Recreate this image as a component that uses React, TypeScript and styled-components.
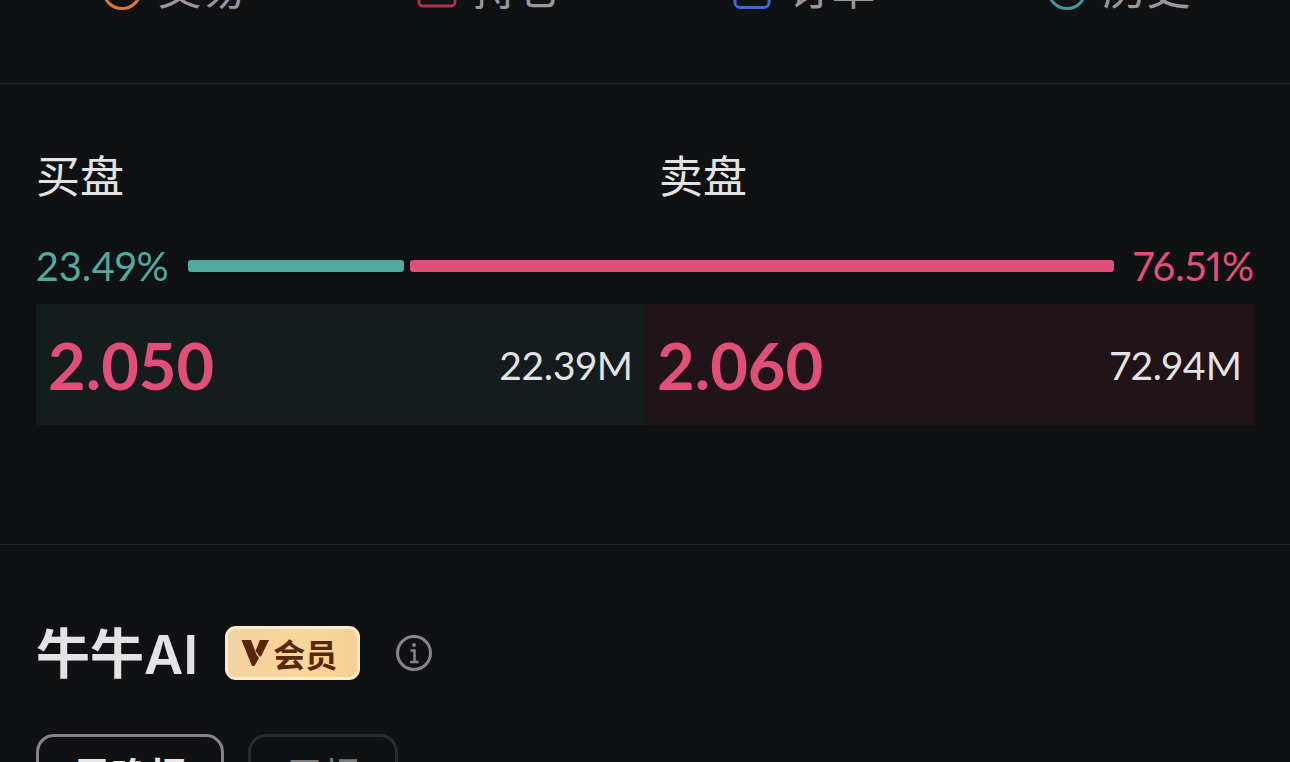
import React from "react";
import styled, { createGlobalStyle } from "styled-components";

const GlobalStyle = createGlobalStyle`
  * { box-sizing: border-box; }
  body {
    margin: 0;
    background: #101113;
    color: #e3e3e5;
    font-family: Lato, "Noto Sans CJK SC", sans-serif;
  }
`;

const GREEN = "#52aa9e";
const PINK = "#e04f78";

const Screen = styled.main`
  height: 100vh;
  overflow: hidden;
`;

const Nav = styled.nav`
  display: grid;
  grid-template-columns: repeat(4, 1fr);
  margin-top: -35px;
  padding: 0 14px 72px 16px;
  border-bottom: 1px solid #26272a;
`;

const NavLink = styled.a`
  display: flex;
  justify-content: center;
  align-items: center;
  gap: 16px;
  color: #98989b;
  font-size: 44px;
  line-height: 46px;
  text-decoration: none;
`;

const Depth = styled.section`
  padding: 70px 36px 119px;
  border-bottom: 1px solid #222326;
`;

const Sides = styled.div`
  display: grid;
  grid-template-columns: 1fr 1fr;
  column-gap: 28px;
`;

const SideTitle = styled.h2`
  margin: 0;
  font-size: 44px;
  font-weight: 400;
  line-height: 44px;
`;

const Ratio = styled.div`
  display: flex;
  align-items: center;
  gap: 19px;
  margin-top: 44px;
  height: 48px;
`;

const Percent = styled.span<{ $color: string }>`
  color: ${(p) => p.$color};
  font-size: 40px;
  line-height: 48px;
  font-variant-numeric: proportional-nums;
`;

const Track = styled.div`
  display: flex;
  flex: 1;
  gap: 6px;
`;

const Bar = styled.div<{ $color: string }>`
  height: 12px;
  border-radius: 3px;
  background: ${(p) => p.$color};
`;

const Quotes = styled.div`
  display: grid;
  grid-template-columns: 1fr 1fr;
  margin-top: 14px;
`;

const Quote = styled.div<{ $bg: string }>`
  display: flex;
  align-items: center;
  justify-content: space-between;
  height: 121px;
  padding: 0 12px;
  background: ${(p) => p.$bg};
`;

const Price = styled.strong`
  color: ${PINK};
  font-size: 65px;
  font-weight: 700;
  line-height: 76px;
`;

const Volume = styled.span`
  font-size: 39px;
  line-height: 48px;
  font-variant-numeric: proportional-nums;
`;

const Assistant = styled.section`
  padding: 81px 36px 40px;
`;

const Heading = styled.header`
  display: flex;
  align-items: center;
  height: 54px;
`;

const Title = styled.h2`
  margin: 0;
  padding-top: 3px;
  font-family: Inter, "Noto Sans CJK SC", sans-serif;
  font-size: 54px;
  font-weight: 600;
  line-height: 54px;
`;

const Member = styled.button`
  display: flex;
  align-items: center;
  gap: 4px;
  height: 54px;
  margin: 0 36px 0 27px;
  padding: 0 20px 0 13px;
  border: 3px solid #fdebcb;
  border-radius: 11px;
  background: linear-gradient(100deg, #f1d3a2, #fad699 60%, #f5d196);
  color: #582609;
  font-family: "Noto Sans CJK SC", sans-serif;
  font-size: 32px;
  font-weight: 700;
  line-height: 40px;
`;

const InfoButton = styled.button`
  display: flex;
  padding: 0;
  border: 0;
  background: none;
  color: #858587;
`;

const Tabs = styled.div`
  display: flex;
  gap: 24px;
  margin-top: 54px;
`;

const Tab = styled.button<{ $active?: boolean }>`
  padding: 18px 34px;
  border: 3px solid ${(p) => (p.$active ? "#858587" : "#2b2c2f")};
  border-radius: 18px;
  background: none;
  color: ${(p) => (p.$active ? "#e9e9ea" : "#7c7c7f")};
  font-family: "Noto Sans CJK SC", sans-serif;
  font-size: 38px;
  font-weight: ${(p) => (p.$active ? 700 : 400)};
  line-height: 38px;
`;

const Icon = ({ color, children }: { color: string; children: React.ReactNode }) => (
  <svg width="40" height="46" viewBox="0 0 40 46" fill="none" stroke={color} strokeWidth="3" aria-hidden="true">
    {children}
  </svg>
);

const links = [
  { label: "交易", icon: <Icon color="#d97a38"><circle cx="20" cy="25" r="18.5" /><path d="M12 20h16l-5-5M28 28H12l5 5" /></Icon> },
  { label: "持仓", icon: <Icon color="#a93442"><rect x="2" y="8" width="36" height="33" rx="4" /><path d="M10 26h20" /></Icon> },
  { label: "订单", icon: <Icon color="#3d68dc"><rect x="3" y="6" width="34" height="36.5" rx="5" /><path d="M11 17h18M11 26h12" /></Icon> },
  { label: "历史", icon: <Icon color="#4397a3"><circle cx="20" cy="25" r="18.5" /><path d="M20 14v11h9" /></Icon> },
];

export default function App() {
  const buy = 23.49;
  const sell = 76.51;
  return (
    <Screen>
      <GlobalStyle />
      <Nav>
        {links.map((l) => (
          <NavLink href="#" key={l.label}>
            {l.icon}
            <span>{l.label}</span>
          </NavLink>
        ))}
      </Nav>

      <Depth>
        <Sides>
          <SideTitle>买盘</SideTitle>
          <SideTitle>卖盘</SideTitle>
        </Sides>
        <Ratio>
          <Percent $color={GREEN}>{buy}%</Percent>
          <Track>
            <Bar $color={GREEN} style={{ flex: buy }} />
            <Bar $color={PINK} style={{ flex: sell }} />
          </Track>
          <Percent $color={PINK}>{sell}%</Percent>
        </Ratio>
        <Quotes>
          <Quote $bg="#141c1e">
            <Price>2.050</Price>
            <Volume>22.39M</Volume>
          </Quote>
          <Quote $bg="#201418">
            <Price>2.060</Price>
            <Volume>72.94M</Volume>
          </Quote>
        </Quotes>
      </Depth>

      <Assistant>
        <Heading>
          <Title>牛牛AI</Title>
          <Member>
            <svg width="28" height="28" viewBox="0 0 28 28" fill="currentColor" aria-hidden="true">
              <path d="M0.500 1h9.500l5.500 14.500 2.500 3.500-4.500 8h-2.500z" />
              <path d="M19 1h9l-7.500 15.500-1.500 1.500-4.500-6z" />
            </svg>
            会员
          </Member>
          <InfoButton aria-label="info">
            <svg width="36" height="36" viewBox="0 0 36 36" fill="none" stroke="currentColor" strokeWidth="3" aria-hidden="true">
              <circle cx="18" cy="18" r="16.500" />
              <circle cx="18" cy="10" r="2" fill="currentColor" stroke="none" />
              <path d="M14.500 15.500h4v11.500M14 27h8.500" strokeWidth="2.500" />
            </svg>
          </InfoButton>
        </Heading>
        <Tabs>
          <Tab $active>早晚报</Tab>
          <Tab>周报</Tab>
        </Tabs>
      </Assistant>
    </Screen>
  );
}
